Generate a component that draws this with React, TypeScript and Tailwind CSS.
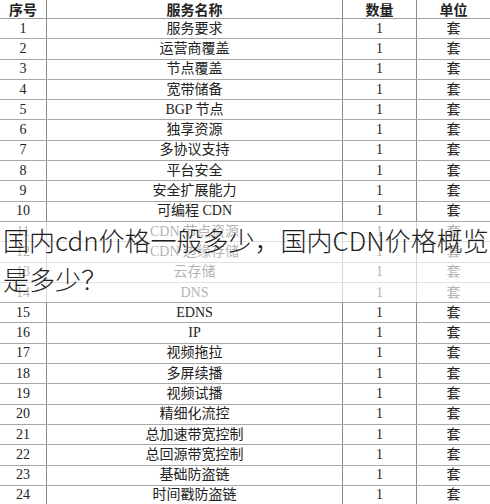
import React from "react";

const rows: [string, string][] = [
  ["1", "服务要求"],
  ["2", "运营商覆盖"],
  ["3", "节点覆盖"],
  ["4", "宽带储备"],
  ["5", "BGP 节点"],
  ["6", "独享资源"],
  ["7", "多协议支持"],
  ["8", "平台安全"],
  ["9", "安全扩展能力"],
  ["10", "可编程 CDN"],
  ["11", "CDN 节点资源"],
  ["12", "CDN 边缘存储"],
  ["13", "云存储"],
  ["14", "DNS"],
  ["15", "EDNS"],
  ["16", "IP"],
  ["17", "视频拖拉"],
  ["18", "多屏续播"],
  ["19", "视频试播"],
  ["20", "精细化流控"],
  ["21", "总加速带宽控制"],
  ["22", "总回源带宽控制"],
  ["23", "基础防盗链"],
  ["24", "时间戳防盗链"],
];

const serif = { fontFamily: '"Liberation Serif", "Noto Sans CJK SC", serif' };

export default function App() {
  return (
    <div className="relative w-[490px] h-[504px] overflow-hidden bg-white">
      <div className="flex flex-col text-[#222] text-[14px]" style={serif}>
        <div className="grid grid-cols-[47px_296px_74px_1fr] h-[19px] border-b border-[#a0a0a0] font-bold text-[14px] leading-none" style={{ fontFamily: '"Noto Sans CJK SC", sans-serif' }}>
          <div className="flex items-center justify-center border-r border-[#8a8a8a]">序号</div>
          <div className="flex items-center justify-center border-r border-[#8a8a8a]">服务名称</div>
          <div className="flex items-center justify-center border-r border-[#8a8a8a]">数量</div>
          <div className="flex items-center justify-center">单位</div>
        </div>
        {rows.map(([n, name]) => (
          <div key={n} className="grid grid-cols-[47px_296px_74px_1fr] h-[20.3px] border-b border-[#a8a8a8] leading-none">
            <div className="flex items-center justify-center border-r border-[#8a8a8a]">{n}</div>
            <div className="flex items-center justify-center border-r border-[#8a8a8a] whitespace-pre">{name}</div>
            <div className="flex items-center justify-center border-r border-[#8a8a8a]">1</div>
            <div className="flex items-center justify-center">套</div>
          </div>
        ))}
      </div>
      <div className="absolute left-0 right-0 top-[222px] h-[80px] bg-white/65" />
      <div
        className="absolute left-[3px] top-[220px] w-[490px] text-[26px] leading-[39px] font-light text-[#1e1e1e]"
        style={{ fontFamily: '"Noto Sans CJK SC", sans-serif' }}
      >
        国内cdn价格一般多少，国内CDN价格概览是多少？
      </div>
    </div>
  );
}
